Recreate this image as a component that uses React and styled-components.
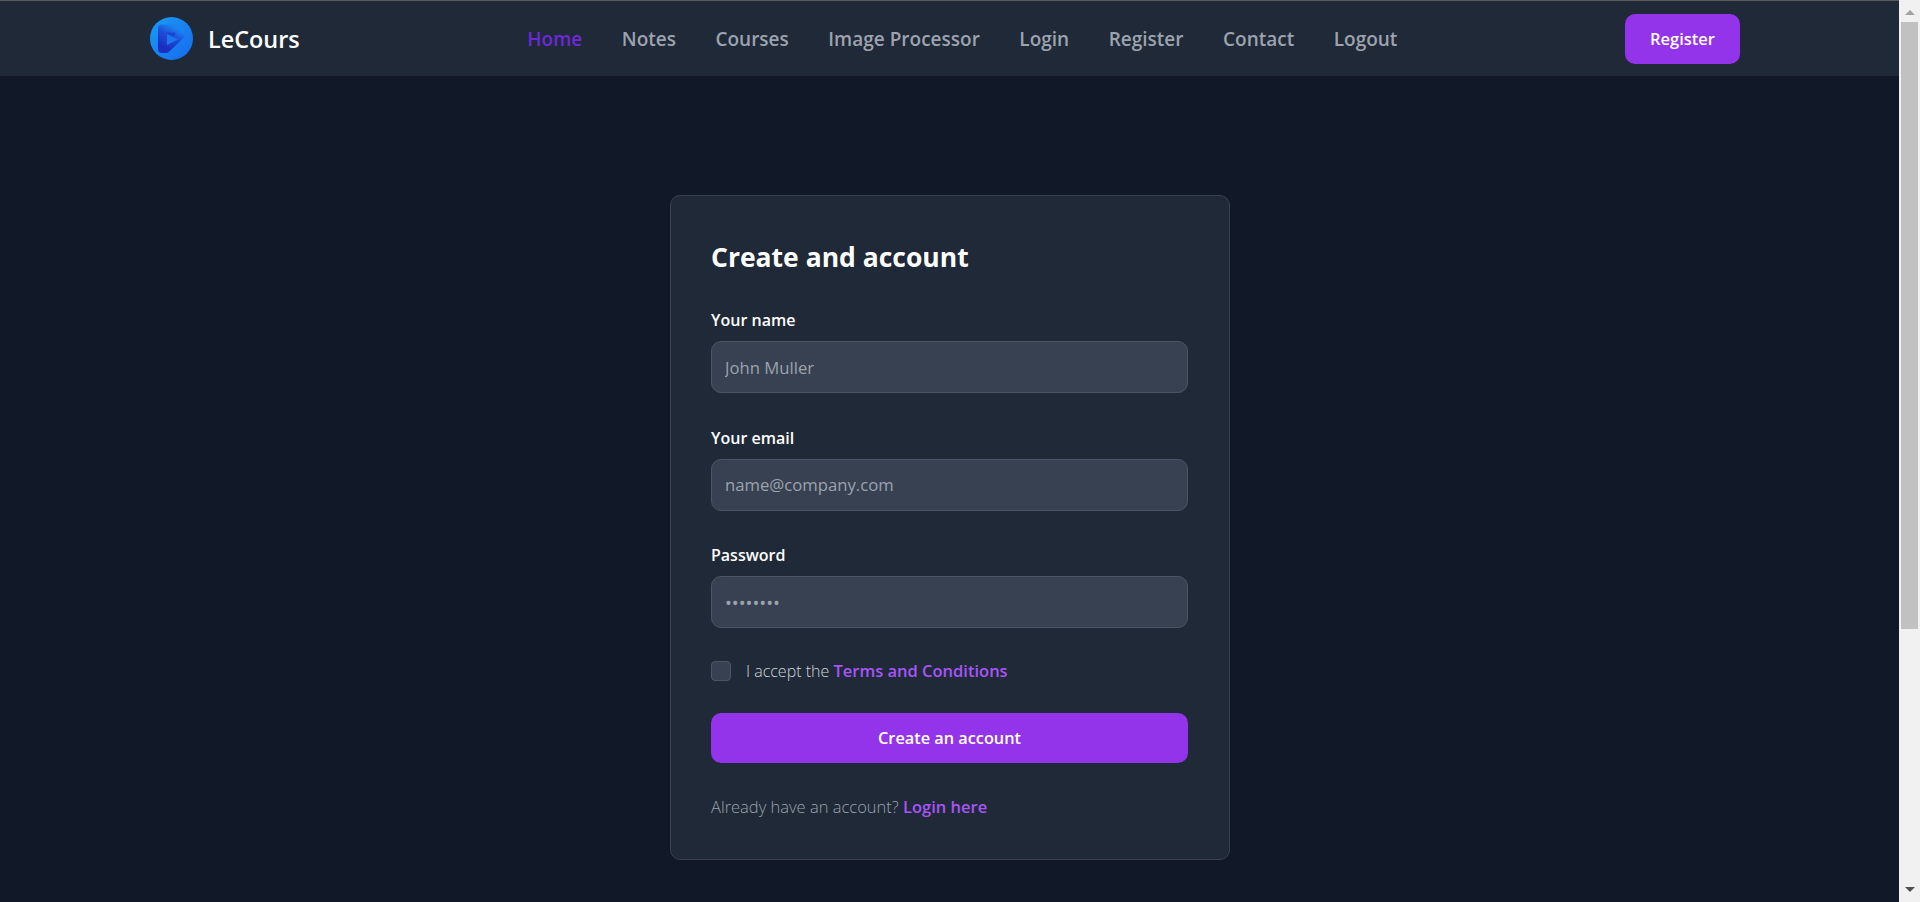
import React from 'react';
import styled, { createGlobalStyle } from 'styled-components';

const GlobalStyle = createGlobalStyle`
  html, body {
    height: 100%;
    overflow: hidden;
  }

  body {
    margin: 0;
    background: #111827;
    font-family: "Open Sans", "Noto Sans", sans-serif;
  }

  * {
    box-sizing: border-box;
  }
`;

const Shell = styled.div`
  display: flex;
  height: 100vh;
`;

const Page = styled.div`
  flex: 1;
  min-width: 0;
  background: #111827;
`;

// the browser's scrollbar, visible in the screenshot
const Scrollbar = styled.div`
  width: 21px;
  display: flex;
  flex-direction: column;
  align-items: center;
  background: #f1f1f1;
`;

const ArrowButton = styled.div`
  height: 22px;
  flex: none;
  padding-top: ${(p) => (p.$down ? '7px' : '10px')};
`;

const Arrow = styled.div`
  width: 0;
  height: 0;
  border-left: 5px solid transparent;
  border-right: 5px solid transparent;
  ${(p) => (p.$down ? 'border-top: 5px solid #505050;' : 'border-bottom: 5px solid #a3a3a3;')}
`;

const Thumb = styled.div`
  width: 17px;
  height: 607px;
  flex: none;
  background: #c1c1c1;
`;

const TrackRest = styled.div`
  flex: 1;
`;

const TopEdge = styled.div`
  height: 1px;
  background: #5a5a5a;
`;

const Navbar = styled.nav`
  height: 75px;
  padding: 0 159px 0 150px;
  display: flex;
  align-items: center;
  justify-content: space-between;
  background: #1f2937;
`;

const Brand = styled.a`
  display: flex;
  align-items: center;
  gap: 15px;
  color: #fff;
  font-size: 23.4px;
  font-weight: 600;
`;

const NavLinks = styled.ul`
  display: flex;
  gap: 39.5px;
  margin: 0;
  padding: 0;
  list-style: none;
`;

const NavLink = styled.a`
  font-size: 19px;
  font-weight: 600;
  color: ${(p) => (p.$active ? '#6d28d9' : '#9ca3af')};
`;

const RegisterButton = styled.button`
  width: 115px;
  height: 50px;
  border: 0;
  border-radius: 10px;
  background: #9333ea;
  color: #fff;
  font: 600 16.5px "Open Sans", sans-serif;
`;

const Main = styled.main`
  display: flex;
  justify-content: center;
  padding: 119px 0 0 1px;
`;

const Card = styled.section`
  width: 560px;
  height: 665px;
  padding: 40px 41px 40px 40px;
  border: 1px solid #374151;
  border-radius: 10px;
  background: #1f2937;
`;

const Title = styled.h1`
  margin: 0 0 30px;
  color: #fff;
  font-size: 26.5px;
  line-height: 42px;
  font-weight: 700;
`;

const Field = styled.div`
  margin-bottom: ${(p) => (p.$last ? '31px' : '32.5px')};
`;

const Label = styled.label`
  display: block;
  margin-bottom: 9px;
  color: #fff;
  font-size: 16px;
  line-height: 24px;
  font-weight: 600;
`;

const Input = styled.input`
  display: block;
  width: 100%;
  height: 52px;
  padding: 0 13px;
  border: 1px solid #4b5563;
  border-radius: 10px;
  background: #374151;
  color: #9ca3af;
  font: 400 16.7px "Open Sans", sans-serif;

  &::placeholder {
    color: #9ca3af;
  }
`;

const PasswordInput = styled(Input)`
  font-size: 18.3px;
`;

const Terms = styled.div`
  display: flex;
  align-items: center;
  gap: 15px;
  margin-bottom: 30px;
  color: #d1d5db;
  font-size: 16px;
  line-height: 24px;
  font-weight: 300;
`;

const Check = styled.span`
  width: 20px;
  height: 20px;
  border: 1px solid #4b5563;
  border-radius: 4px;
  background: #374151;
`;

const Accent = styled.a`
  color: #a855f7;
  font-size: 16.5px;
  font-weight: 600;
`;

const SubmitButton = styled.button`
  display: block;
  width: 100%;
  height: 50px;
  border: 0;
  border-radius: 10px;
  background: #9333ea;
  color: #fff;
  font: 600 16.3px "Open Sans", sans-serif;
`;

const Footnote = styled.p`
  margin: 32px 0 0;
  color: #9ca3af;
  font-size: 16.5px;
  line-height: 24px;
  font-weight: 300;
`;

const Logo = () => (
  <svg width="43" height="43" viewBox="0 0 43 43">
    <defs>
      <linearGradient id="logoOuter" x1="0" y1="0" x2="1" y2="1">
        <stop offset="0" stopColor="#1a9cf7" />
        <stop offset="1" stopColor="#1669ee" />
      </linearGradient>
      <linearGradient id="logoRibbon" x1="0.8" y1="0" x2="0.3" y2="1">
        <stop offset="0" stopColor="#1a84f2" />
        <stop offset="0.45" stopColor="#1c4ed8" />
        <stop offset="1" stopColor="#1b2ebf" />
      </linearGradient>
    </defs>
    <circle cx="21.5" cy="21.5" r="21.5" fill="url(#logoOuter)" />
    <path
      d="M12 32V11.5H27L31 18L16 32Z"
      fill="#1b45d0"
      stroke="url(#logoRibbon)"
      strokeWidth="8"
      strokeLinejoin="round"
    />
    <path d="M17 17L28 22.5L17 28Z" fill="#1a78ee" />
  </svg>
);

const links = ['Home', 'Notes', 'Courses', 'Image Processor', 'Login', 'Register', 'Contact', 'Logout'];

const App = () => {
  return (
    <Shell>
      <GlobalStyle />
      <Page>
        <TopEdge />
        <Navbar>
          <Brand>
            <Logo />
            LeCours
          </Brand>
          <NavLinks>
            {links.map((link, i) => (
              <li key={link}>
                <NavLink $active={i === 0}>{link}</NavLink>
              </li>
            ))}
          </NavLinks>
          <RegisterButton>Register</RegisterButton>
        </Navbar>
        <Main>
          <Card>
            <Title>Create and account</Title>
            <Field>
              <Label>Your name</Label>
              <Input placeholder="John Muller" />
            </Field>
            <Field>
              <Label>Your email</Label>
              <Input placeholder="name@company.com" />
            </Field>
            <Field $last>
              <Label>Password</Label>
              <PasswordInput type="password" defaultValue="password" />
            </Field>
            <Terms>
              <Check />
              <span>I accept the <Accent>Terms and Conditions</Accent></span>
            </Terms>
            <SubmitButton>Create an account</SubmitButton>
            <Footnote>Already have an account? <Accent>Login here</Accent></Footnote>
          </Card>
        </Main>
      </Page>
      <Scrollbar>
        <ArrowButton>
          <Arrow />
        </ArrowButton>
        <Thumb />
        <TrackRest />
        <ArrowButton $down>
          <Arrow $down />
        </ArrowButton>
      </Scrollbar>
    </Shell>
  );
};

export default App;
